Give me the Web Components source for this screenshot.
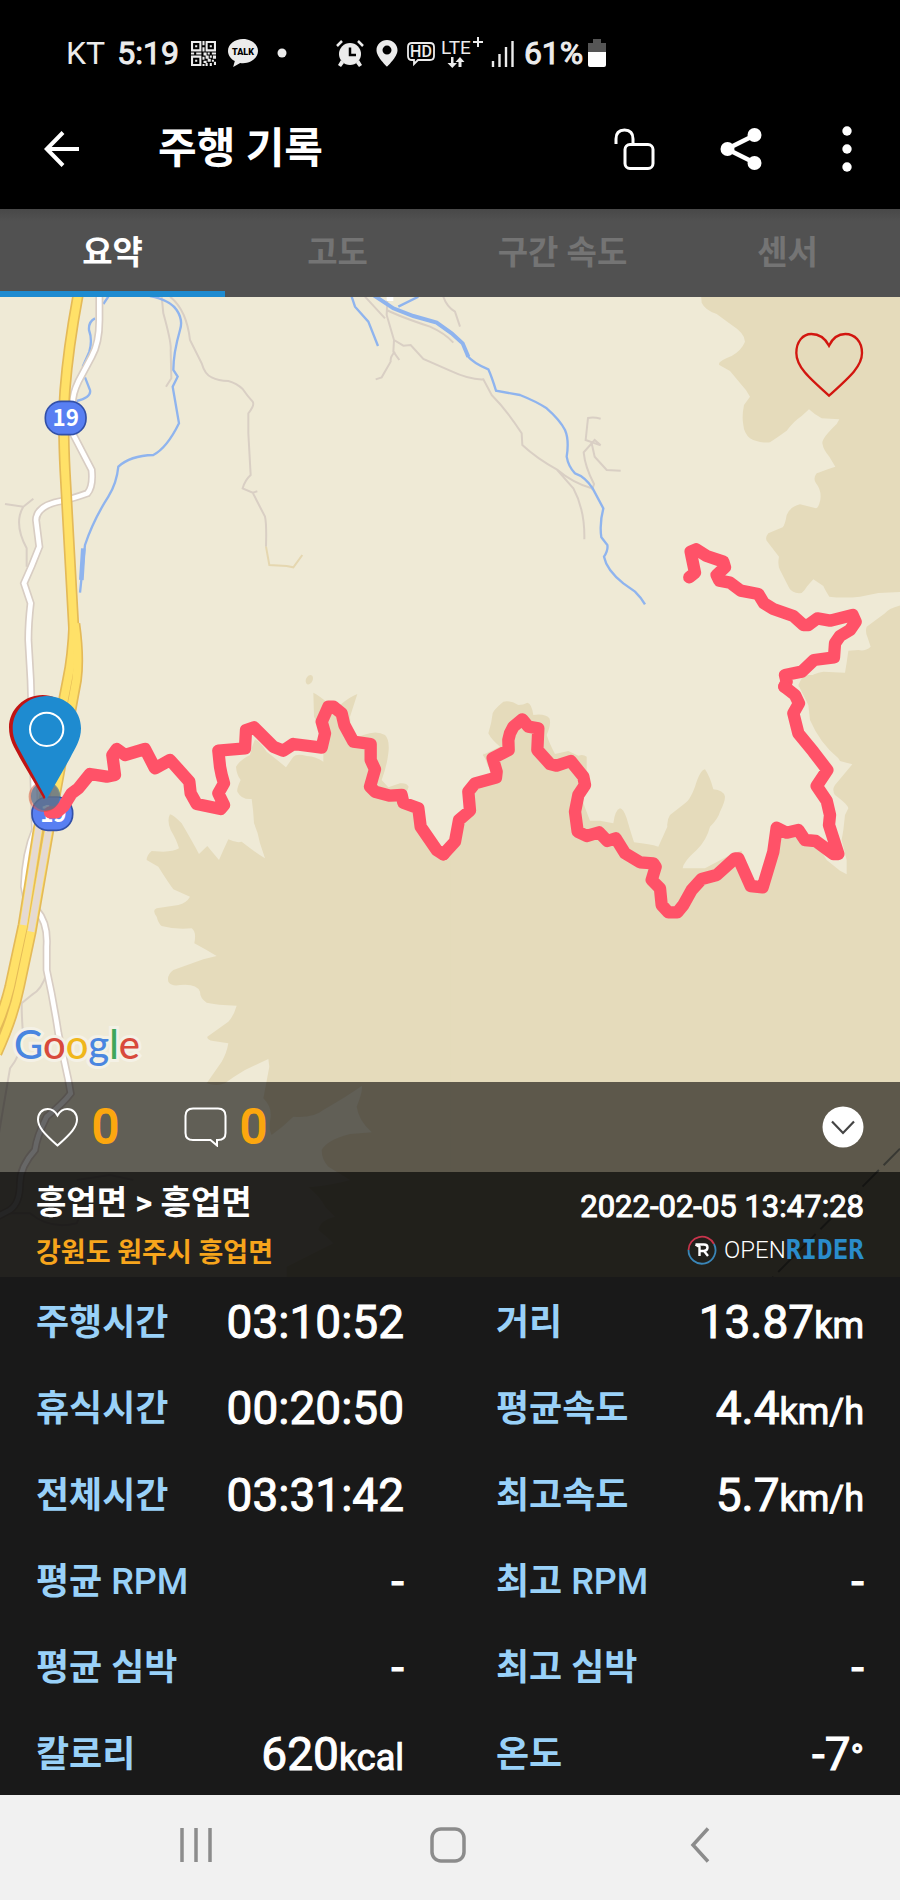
<!DOCTYPE html>
<html lang="ko">
<head>
<meta charset="utf-8">
<meta name="viewport" content="width=device-width, initial-scale=1">
<title>주행 기록</title>
<style>
  body { margin: 0; background: #191919; font-family: Roboto, "Noto Sans CJK KR", sans-serif; color: #fff; }
</style>
</head>
<body>
<ride-record-app></ride-record-app>

<script>
const define = (name, html, setup) => {
  const template = document.createElement('template');
  template.innerHTML = html;
  customElements.define(name, class extends HTMLElement {
    constructor() {
      super();
      this.attachShadow({ mode: 'open' }).append(template.content.cloneNode(true));
    }
    connectedCallback() { if (setup) setup(this, this.shadowRoot); }
  });
};

/* Device status bar */
define('status-bar', `
<style>
  :host { display: flex; align-items: center; gap: 12px; height: 106px; padding: 0 66px; background: #000; color: #ececec; font-size: 32px; line-height: 40px; box-sizing: border-box; }
  div { display: flex; align-items: center; gap: 12px; }
  .right { gap: 6px; margin-left: 27px; }
  .battery { gap: 5px; margin-left: -4px; }
  .strong { -webkit-text-stroke: 1px; }
  svg { display: block; flex: none; }
</style>
<div>
  <span>KT</span>
  <span class="strong">5:19</span>
  <svg width="25" height="25" viewBox="0 0 24 24" fill="none" stroke="#ececec" stroke-width="2">
    <path d="M1 1h8v8H1zM15 1h8v8h-8zM1 15h8v8H1z"/>
    <path fill="#ececec" stroke="none" d="M4 4h2v2H4zM18 4h2v2h-2zM4 18h2v2H4zM11 0h2v4h-2zM11 6h2v4h-2zM0 11h3v2H0zM5 11h5v2H5zM12 11h3v3h-3zM16 11h2v2h-2zM20 11h4v2h-4zM11 15h2v3h-2zM14 14h3v3h-3zM18 14h2v2h-2zM21 14h3v3h-3zM16 17h3v3h-3zM20 18h2v2h-2zM12 19h3v2h-3zM11 22h2v2h-2zM14 21h2v3h-2zM18 21h2v3h-2zM22 20h2v3h-2z"/>
  </svg>
  <svg width="30" height="28" viewBox="0 0 30 28"><path fill="#ececec" d="M15 0C6.700 0 0 5.400 0 12c0 4.300 2.700 8 6.800 10.100L5.200 28l7-4c.9.100 1.800.200 2.800.200 8.300 0 15-5.500 15-12.200S23.300 0 15 0z"/><text x="15" y="16" text-anchor="middle" font-family="Roboto, sans-serif" font-weight="900" font-size="9" fill="#000">TALK</text></svg>
  <svg width="24" height="10" viewBox="0 0 24 10"><circle cx="12" cy="5" r="4.500" fill="#ececec"/></svg>
</div>
<div class="right">
  <svg width="34" height="28" viewBox="0 0 34 28"><g fill="#ececec"><circle cx="17" cy="15" r="11"/><path d="M8 21l3 3-3 4-3-2zM26 21l-3 3 3 4 3-2z"/></g><g fill="none" stroke="#ececec" stroke-width="2.500"><path d="M4 7l5-5M30 7l-5-5"/></g><path d="M17 8.500V16h6" fill="none" stroke="#000" stroke-width="2.500"/></svg>
  <svg width="28" height="28" viewBox="0 0 28 28"><path fill="#ececec" fill-rule="evenodd" d="M14 1C8.200 1 3.500 5.400 3.500 11.200 3.500 18 14 27.500 14 27.500S24.500 18 24.500 11.200C24.500 5.400 19.800 1 14 1zm0 5.600a4.500 4.500 0 1 1 0 9 4.500 4.500 0 0 1 0-9z"/></svg>
  <svg width="28" height="28" viewBox="0 0 28 28"><path d="M5 4h18q4 0 4 4v9q0 4-4 4H11l-4 4v-4H5q-4 0-4-4V8q0-4 4-4z" fill="none" stroke="#ececec" stroke-width="1.800"/><text x="14" y="18" text-anchor="middle" font-family="Roboto, sans-serif" font-weight="500" font-size="16" fill="#ececec">HD</text></svg>
  <svg width="43" height="38" viewBox="0 0 43 38"><text x="0" y="20" font-family="Roboto, sans-serif" font-weight="400" font-size="19" fill="#ececec">LTE</text><path d="M37 3v10M32 8h10" stroke="#ececec" stroke-width="2" fill="none"/><path fill="#ececec" d="M10 23h2.500v6H16l-4.700 5-4.800-5H10zM17.500 33V28h-3l4.500-5 4.500 5h-3v5z"/></svg>
  <svg width="26" height="28" viewBox="0 0 26 28"><path d="M3 22v6M9.500 15v13M16 8v20M22.500 2v26" stroke="#ececec" stroke-width="2.400" fill="none"/></svg>
</div>
<div class="battery">
  <span class="strong">61%</span>
  <svg width="18" height="28" viewBox="0 0 18 28"><path fill="#555" d="M5 0h8v4h5v10H0V4h5z"/><path fill="#fff" d="M0 13h18v13q0 2-2 2H2q-2 0-2-2z"/></svg>
</div>
`);

/* App bar */
define('app-bar', `
<style>
  :host { display: flex; align-items: center; height: 103px; padding: 0 23px 18px 32px; background: #000; box-sizing: border-box; }
  h1 { flex: 1; margin: 0 0 0 66px; font-size: 42px; line-height: 52px; font-weight: 700; }
  nav { display: flex; align-items: center; gap: 46px; }
  button { display: grid; place-items: center; width: 60px; height: 60px; padding: 0; border: 0; background: none; color: #fff; }
  .back { place-items: center start; padding-left: 12px; }
</style>
<button class="back" aria-label="뒤로"><svg width="35" height="36" viewBox="0 0 35 36" fill="none" stroke="#fff" stroke-width="4"><path d="M35 18H3M19 1.500L2.800 18 19 34.500"/></svg></button>
<h1><slot></slot></h1>
<nav>
  <button aria-label="잠금 해제"><svg width="42" height="44" viewBox="0 0 42 44" fill="none" stroke="#fff" stroke-width="3"><rect x="11" y="17.500" width="28" height="24" rx="5"/><path d="M2 17v-5q0-9 8.500-9t8.500 9v5.500"/></svg></button>
  <button aria-label="공유"><svg width="42" height="42" viewBox="0 0 42 42"><path d="M35 7L7 21l28 14" fill="none" stroke="#fff" stroke-width="4.600"/><g fill="#fff"><circle cx="34.500" cy="7" r="7"/><circle cx="7.500" cy="21" r="7"/><circle cx="34.500" cy="35" r="7"/></g></svg></button>
  <button aria-label="더보기"><svg width="10" height="46" viewBox="0 0 10 46" fill="#fff"><circle cx="5" cy="5" r="4.700"/><circle cx="5" cy="23" r="4.700"/><circle cx="5" cy="41" r="4.700"/></svg></button>
</nav>
`);

/* Tabs */
define('tab-strip', `
<style>
  :host { display: grid; grid-template-columns: repeat(4, 1fr); height: 88px; background: linear-gradient(#484848, #515151 12px); }
  button { border: 0; border-bottom: 6px solid transparent; padding: 6px 0 0; background: none; color: #747474; font: 700 33px/44px Roboto, "Noto Sans CJK KR", sans-serif; }
  button[aria-selected="true"] { color: #fff; border-color: #1e8bd0; }
</style>
`, (host, root) => {
  host.setAttribute('role', 'tablist');
  host.getAttribute('items').split(',').forEach((label, i) => {
    const b = document.createElement('button');
    b.setAttribute('role', 'tab');
    b.setAttribute('aria-selected', i === 0);
    b.textContent = label;
    b.onclick = () => root.querySelectorAll('button').forEach(o => o.setAttribute('aria-selected', o === b));
    root.append(b);
  });
});

/* Map drawing; units are thirds of a pixel at 900px width */
define('route-map', `
<style>
  :host { display: block; background: #efead6; overflow: hidden; }
  svg { display: block; width: 100%; height: auto; }
  .land { fill: #e5dbbb; }
  .trail { fill: none; stroke: #d9cfc4; stroke-width: 6; }
  .river { fill: none; stroke: #8fb4ee; stroke-width: 7; }
  .road-edge { fill: none; stroke: #d8cdc3; stroke-width: 24; }
  .road { fill: none; stroke: #fff; stroke-width: 14; }
  .hwy-edge { fill: none; stroke: #e4ba58; stroke-width: 34; }
  .hwy { fill: none; stroke: #ffe168; stroke-width: 24; }
  .tunnel { fill: none; stroke: #e5dad2; stroke-width: 20; }
  .route { fill: none; stroke: #ff5268; stroke-width: 37; stroke-linejoin: round; stroke-linecap: round; }
  .shield { fill: #587ff2; stroke: #3250a8; stroke-width: 5; }
  text { font-family: "Noto Sans CJK KR", sans-serif; font-weight: 700; font-size: 67px; fill: #fff; text-anchor: middle; }
</style>
<svg viewBox="0 0 2700 2940" role="img" aria-label="주행 경로 지도">
  <g class="land">
    <g transform="translate(1350 -21)">
      <path d="M752 0L755 38Q765 60 800 72L845 105Q885 130 885 155Q875 180 845 198Q800 215 808 225L840 243L875 285Q890 300 900 320L882 345Q875 380 880 405Q882 430 900 445Q925 460 960 457Q985 440 1010 422Q1030 395 1055 378L1077 358Q1095 375 1115 385L1168 388L1160 402Q1115 445 1117 460Q1120 480 1138 500L1156 530Q1110 545 1100 550Q1088 565 1098 580Q1115 600 1111 630Q1105 655 1098 655L1050 643Q1020 650 1010 675Q1005 705 998 712L955 730Q945 742 950 752L987 800Q982 825 990 840L1018 895Q1028 912 1055 909Q1065 900 1072 888L1090 868L1120 888Q1125 900 1138 920Q1180 925 1230 920L1285 909L1355 906V0Z"/>
      <path d="M1355 945Q1315 955 1305 970L1250 1010Q1245 1025 1252 1040L1262 1070Q1245 1085 1225 1080L1195 1082Q1190 1120 1185 1148L1120 1145Q1090 1150 1070 1165L1045 1190H1355Z"/>
    </g>
    <path transform="translate(1350 1149)" d="M1355 -15H1060L1045 15L1075 75L1080 120Q1110 190 1165 235L1170 243L1207 253L1155 315Q1145 330 1155 345Q1195 375 1195 385L1185 405L1180 450L1175 480L1190 540V583L1170 572L1130 540L1095 483L1045 460L980 450L940 620H900L875 512L850 520L765 565L698 565Q700 545 740 510Q770 480 780 440Q805 415 810 395Q825 365 825 350Q820 330 790 328Q780 290 765 268Q750 270 735 320Q720 360 705 370L660 405Q650 420 652 440L625 500Q600 492 552 487Q540 450 530 415Q520 385 510 385Q495 390 490 430L450 422H420L404 380L390 340L410 300V230Q400 222 385 227L355 213L315 222Q298 190 290 165Q305 130 298 115Q285 100 250 105Q245 70 232 68Q220 75 205 75Q180 60 160 65Q130 90 128 100Q125 130 115 160Q125 180 150 200L98 225L125 260L150 290L75 305L55 340V395L20 420L-10 510V1800H1355Z"/>
    <path transform="translate(0 1149)" d="M1352 490L1330 530L1260 430L1250 380L1215 350L1226 320Q1220 308 1200 310L1165 322L1145 300Q1160 260 1165 220Q1170 180 1155 165Q1130 150 1090 165L1055 180L1050 110L1072 42Q1050 50 1020 75L985 70Q955 45 940 38L942 110L970 160V245Q950 230 920 228Q890 220 880 230L858 262Q820 230 800 215Q780 185 765 178Q755 200 750 225Q720 240 708 260Q710 285 722 300Q710 325 712 335Q725 360 755 357Q760 390 762 430Q775 460 780 490L795 535Q770 520 725 485Q710 490 685 478Q670 510 657 540Q640 520 622 498L597 522Q580 490 545 430Q520 405 510 403Q500 420 512 450Q530 480 537 505Q520 515 490 515L455 513Q440 525 440 540L475 560Q500 600 520 628L570 650Q560 668 535 675L470 685Q455 690 470 710Q475 730 485 738Q530 750 575 745Q590 755 583 790Q620 810 650 828L610 838L520 870Q500 885 505 905Q515 920 540 915Q590 910 600 935Q600 955 620 968Q650 975 710 977Q700 1010 685 1025Q650 1050 622 1070Q620 1080 640 1083L685 1090Q680 1120 665 1145L620 1210Q650 1220 675 1210L700 1192L735 1170L805 1137L808 1160L790 1255Q815 1280 812 1310Q805 1350 815 1365Q850 1340 880 1310Q940 1315 970 1290Q1040 1250 1085 1218Q1090 1230 1070 1280Q1075 1320 1115 1357L1050 1362Q980 1380 965 1410Q965 1440 985 1460L1050 1500Q1000 1515 925 1522Q960 1550 975 1580L1005 1610Q960 1620 955 1650Q980 1670 1000 1690L860 1760V1800H1352Z"/>
    <ellipse cx="928" cy="1148" rx="10" ry="15" transform="rotate(25 928 1148)"/>
    <path d="M1450 1370l45 10-30 30z"/>
  </g>
  <g transform="translate(0 -21)">
    <g class="trail">
      <path d="M483 0L490 70Q515 160 512 180L514 265L498 290M510 20Q560 60 570 150L605 220Q615 255 635 262Q655 272 685 273Q710 280 728 297Q740 315 758 335Q765 345 745 370L745 430L752 555Q735 570 728 595L758 608L772 604M758 608L795 680Q800 700 798 770"/>
      <path stroke="#e5d7b0" d="M798 770L808 825L860 828L880 832L907 795"/>
      <path d="M15 642L70 650L100 626M70 650Q40 700 80 775L80 830"/>
      <path d="M1095 20L1155 85M1162 30L1160 75L1182 150L1180 185L1198 210M1185 185Q1170 200 1172 215L1145 262L1127 268M1182 150L1210 167L1232 165L1270 207L1350 242Q1410 270 1450 268L1475 315Q1520 360 1565 430L1567 465Q1610 505 1670 538Q1720 580 1775 595M1670 538L1720 595Q1755 660 1753 748M1160 60Q1200 80 1290 110Q1335 130 1360 158M1330 20Q1340 50 1365 65L1380 110"/>
      <path d="M1802 386Q1780 380 1764 384L1757 450L1802 466M1802 466L1784 450L1751 487Q1755 530 1782 582L1776 600M1775 460L1784 500L1820 540L1862 542"/>
    </g>
    <g class="river">
      <path d="M450 18Q510 30 530 60Q550 90 540 120Q520 190 520 240L533 260L518 290L537 400Q500 475 460 495Q390 497 355 530Q350 580 325 620Q280 690 255 765L240 908"/>
      <path d="M325 20L310 42M285 85Q265 95 267 120Q278 150 268 185L248 230M255 262L270 300Q275 322 230 333"/>
      <path stroke-width="14" d="M250 775L244 870"/>
      <path d="M1055 20L1065 50L1105 95L1134 168M1255 20L1195 50"/>
      <path stroke-width="12" d="M1120 15L1180 55L1240 78L1310 98L1355 130L1388 160L1405 200"/>
      <path d="M1400 195Q1420 220 1465 238Q1475 260 1488 302L1560 315Q1610 335 1640 355Q1680 390 1695 420Q1708 450 1700 500Q1705 530 1725 550Q1755 560 1778 595L1810 655Q1798 700 1804 742L1822 765Q1825 780 1812 800Q1820 840 1870 880L1905 905Q1925 925 1935 943"/>
    </g>
  </g>
  <g transform="translate(0 1149)">
    <path class="trail" d="M140 880Q125 930 95 945L65 970Q65 1020 70 1070Q60 1130 30 1165L-10 1400M230 1500L330 1485L400 1500M-10 1600L90 1600Q150 1650 230 1630L260 1560"/>
  </g>
  <path class="trail" stroke-dasharray="70 20" style="stroke:#8c8b7e" d="M2700 2555L2300 2960"/>
  <g class="road-edge">
    <path d="M298 -10V70Q298 139 275 179L235 254Q218 289 218 319V409L275 519Q280 569 262 589Q220 604 190 611Q110 624 108 669L118 749Q95 809 72 859L92 919Q85 979 85 1029L92 1149L105 1599Q75 1669 72 1769L80 1809L110 1839Q145 1879 140 1949V2019Q160 2109 175 2209L205 2349L212 2389Q190 2419 140 2459Q110 2519 105 2559Q60 2609 60 2659Q60 2719 30 2739L-10 2760"/>
  </g>
  <g class="road">
    <path d="M298 -10V70Q298 139 275 179L235 254Q218 289 218 319V409L275 519Q280 569 262 589Q220 604 190 611Q110 624 108 669L118 749Q95 809 72 859L92 919Q85 979 85 1029L92 1149L105 1599Q75 1669 72 1769L80 1809L110 1839Q145 1879 140 1949V2019Q160 2109 175 2209L205 2349L212 2389Q190 2419 140 2459Q110 2519 105 2559Q60 2609 60 2659Q60 2719 30 2739L-10 2760"/>
    <path d="M1160 5h20"/>
  </g>
  <g class="hwy-edge">
    <path d="M235 -10Q205 149 195 279Q188 379 195 519L222 1009"/>
    <path d="M222 980Q218 1080 203 1149L115 1599L70 1884L30 2069Q10 2149 -20 2209"/>
    <path d="M224 980Q238 1080 229 1149L146 1599L93 1904L58 2069Q40 2159 -10 2269"/>
  </g>
  <g class="hwy">
    <path d="M235 -10Q205 149 195 279Q188 379 195 519L222 1009"/>
    <path d="M222 980Q218 1080 203 1149L115 1599L70 1884L30 2069Q10 2149 -20 2209"/>
    <path d="M224 980Q238 1080 229 1149L146 1599L93 1904L58 2069Q40 2159 -10 2269"/>
  </g>
  <path class="tunnel" d="M118 1580L70 1884M149 1580L93 1904"/>
  <rect class="shield" x="136" y="313" width="122" height="100" rx="48"/>
  <text x="197" y="387">19</text>
  <rect class="shield" x="96" y="1500" width="122" height="100" rx="48"/>
  <text x="160" y="1575">19</text>
  <polyline class="route" transform="translate(1350 -21)" points="718,862 735,848 725,800 722,785 738,778 770,798 820,815 825,832 800,855 808,872 840,878 872,902 925,912 942,940 970,957 1030,978 1060,1005 1075,1005 1102,985 1140,992 1208,975 1217,995 1200,1020 1170,1038 1155,1060 1152,1102 1092,1110 1055,1145 1005,1155 1010,1175 1003,1190"/>
  <polyline class="route" transform="translate(1350 1149)" points="1003,20 1035,45 1047,70 1030,100 1045,160 1090,215 1132,270 1100,318 1130,362 1140,405 1137,435 1165,522 1150,522 1097,483 1065,480 1045,450 1010,458 980,443 970,515 938,622 902,618 865,535 855,535 800,585 755,597 725,630 700,675 682,697 655,697 635,675 630,625 605,600 617,560 610,550 570,547 525,520 497,475 472,483 447,457 410,468 383,455 375,395 385,345 405,315 400,290 362,243 320,257 300,252 262,210 265,145 235,140 217,118 190,140 180,160 175,180 176,210 128,235 140,275 138,293 75,310 55,335 60,392 27,420 15,485 -20,523"/>
  <polyline class="route" transform="translate(0 1149)" points="1330,523 1310,510 1262,440 1255,385 1210,368 1205,345 1170,347 1125,335 1110,320 1125,268 1112,240 1112,192 1060,185 1033,135 1025,100 1000,80 985,80 965,125 975,160 965,203 880,192 850,212 820,200 762,142 738,150 735,205 655,212 660,260 665,285 672,310 655,340 672,375 662,387 590,372 572,340 568,305 510,240 465,265 435,207 375,225 350,207 337,225 345,285 320,290 270,282 235,325 215,340 190,380 170,397 150,397"/>
  <g transform="translate(0 1149)">
    <circle cx="132" cy="350" r="46" fill="#d8502f" opacity=".5"/>
    <circle cx="137" cy="348" r="44" fill="#3d78a0" opacity=".65"/>
    <path fill="#c01414" d="M128 45C180 45 230 90 230 145C230 180 215 205 200 235L132 358L60 235C42 200 27 180 27 142C27 88 73 45 128 45Z"/>
    <path fill="#1e8bd0" d="M140 48C197 48 243 90 243 145C243 180 225 205 210 235L140 358L72 235C54 200 38 180 38 145C38 90 83 48 140 48Z"/>
    <circle cx="140" cy="148" r="50" fill="none" stroke="#fff" stroke-width="6"/>
  </g>
</svg>
`);

/* Map with its overlays stacked in one grid */
define('map-panel', `
<style>
  :host { display: grid; grid-template: minmax(0, 1fr) auto auto / 1fr 1fr; }
  route-map { grid-area: 1 / 1 / -1 / -1; }
  .fav { grid-area: 1 / 2; place-self: start end; margin: 34px 35px 0 0; padding: 0; border: 0; background: none; }
  .fav svg { display: block; }
  .google { grid-area: 1 / 1; place-self: end start; margin: 0 0 16px 14px; font: 500 40px/44px Lato, sans-serif; -webkit-text-stroke: 6px #f4f1e6; paint-order: stroke fill; }
  .b { color: #4a86e0; } .r { color: #d84a3c; } .y { color: #f0b71c; } .g { color: #3fa65b; }
  .social { grid-area: 2 / 1 / 3 / -1; display: flex; align-items: center; height: 90px; padding: 0 36px; background: rgba(0,0,0,.595); }
  .social button { display: flex; align-items: center; gap: 13px; margin-right: 65px; padding: 0; border: 0; background: none; color: #fca70f; font: 400 48px/56px Roboto, sans-serif; -webkit-text-stroke: 2px; }
  .social .more { margin: 0 0 0 auto; }
  .info { grid-area: 3 / 1 / 4 / -1; display: flex; justify-content: space-between; height: 105px; padding: 8px 36px 0; background: rgba(0,0,0,.855); box-sizing: border-box; }
  h2, p { margin: 0; font-weight: 700; }
  h2 { font-size: 33px; line-height: 46px; }
  .where { font-size: 27px; line-height: 54px; color: #f7a51c; }
  .side { display: flex; flex-direction: column; align-items: flex-end; }
  time { font-size: 31px; line-height: 54px; -webkit-text-stroke: 1px; }
  .brand { display: flex; align-items: center; line-height: 32px; font-size: 24px; font-weight: 300; }
  .brand svg { margin-right: 7px; }
  .brand b { font: 700 26px/32px "DejaVu Sans Mono", monospace; color: #2a8ccb; }
</style>
<route-map></route-map>
<button class="fav" aria-label="좋아요"><svg width="72" height="68" viewBox="0 0 216 204"><path transform="translate(-1030 -124)" d="M1138 168C1125 143 1105 133 1085 133C1060 133 1040 155 1040 190C1040 230 1075 262 1138 318C1200 262 1237 230 1237 190C1237 155 1215 133 1187 133C1168 133 1150 143 1138 168Z" fill="none" stroke="#d2160f" stroke-width="7"/></svg></button>
<div class="google"><span class="b">G</span><span class="r">o</span><span class="y">o</span><span class="b">g</span><span class="g">l</span><span class="r">e</span></div>
<div class="social">
  <button aria-label="좋아요 수"><svg width="43" height="40" viewBox="0 0 43 40"><path d="M21.500 8.500C19 4 15.500 2 11.800 2C6 2 2 6.500 2 12.500C2 20 8 26.500 21.500 38.500C35 26.500 41 20 41 12.500C41 6.500 37 2 31.200 2C27.500 2 24 4 21.500 8.500Z" fill="none" stroke="#fff" stroke-width="2"/></svg>0</button>
  <button aria-label="댓글 수"><svg width="43" height="40" viewBox="0 0 43 40"><path d="M9 1.500H34Q41.500 1.500 41.500 9V26Q41.500 33 34 33H33V38.500L26.500 33H9Q1.500 33 1.500 26V9Q1.500 1.500 9 1.500Z" fill="none" stroke="#fff" stroke-width="2"/></svg>0</button>
  <button class="more" aria-label="접기"><svg width="42" height="42" viewBox="0 0 42 42"><circle cx="21" cy="21" r="20.500" fill="#fff"/><path d="M10 15.500L21 27l11-11.500" fill="none" stroke="#444" stroke-width="2.200"/></svg></button>
</div>
<div class="info">
  <div><h2>흥업면 &gt; 흥업면</h2><p class="where">강원도 원주시 흥업면</p></div>
  <div class="side"><time datetime="2022-02-05T13:47:28">2022-02-05 13:47:28</time>
    <div class="brand"><svg width="30" height="30" viewBox="0 0 30 30"><path d="M1.500 15A13.500 13.500 0 0 1 27 9" fill="none" stroke="#c8344c" stroke-width="1.800"/><path d="M27 9A13.500 13.500 0 1 1 1.500 15" fill="none" stroke="#3a86b8" stroke-width="1.800"/><path d="M8.500 9.500H17Q20.500 9.500 20.500 12.500T17 16L21 21M8.500 9.500L12.500 12V21M12.500 16H17" fill="none" stroke="#fff" stroke-width="2.400"/></svg><span>OPEN</span><b>RIDER</b></div>
  </div>
</div>
`);

/* One label and its value */
define('stat-item', `
<style>
  :host { display: flex; align-items: center; justify-content: space-between; padding-top: 6px; white-space: nowrap; }
  .label { color: #99d1f8; font-size: 36px; line-height: 48px; font-weight: 700; }
  .latin { font-weight: 500; }
  .value { padding-top: 2px; font-size: 46px; line-height: 56px; -webkit-text-stroke: 1px; }
  .unit { font-size: 36px; }
</style>
<span class="label"></span><span class="value"><slot></slot><span class="unit"></span></span>
`, (host, root) => {
  root.querySelector('.label').innerHTML = host.getAttribute('label').replace(/[A-Z]+/, '<span class="latin">$&</span>');
  root.querySelector('.unit').textContent = host.getAttribute('unit') || '';
});

define('stat-grid', `
<style>
  :host { display: grid; grid-template-columns: 1fr 1fr; grid-auto-rows: 1fr; column-gap: 92px; height: 518px; padding: 0 36px; background: #191919; box-sizing: border-box; }
</style>
<slot></slot>
`);

/* System navigation */
define('nav-bar', `
<style>
  :host { display: grid; grid-template-columns: repeat(3, 1fr); align-items: center; height: 105px; padding: 0 74px 6px 70px; background: #f1f1f1; box-sizing: border-box; }
  button { display: grid; place-items: center; height: 60px; padding: 0; border: 0; background: none; }
  svg { fill: none; stroke: #8c8c8c; stroke-width: 3.500; }
</style>
<button aria-label="최근 앱"><svg width="34" height="36" viewBox="0 0 34 36"><path d="M3 1v34M17 1v34M31 1v34"/></svg></button>
<button aria-label="홈"><svg width="36" height="36" viewBox="0 0 36 36"><rect x="2" y="2" width="32" height="32" rx="9"/></svg></button>
<button aria-label="뒤로"><svg width="20" height="36" viewBox="0 0 20 36"><path d="M18 1.500L3 18l15 16.500"/></svg></button>
`);

define('ride-record-app', `
<style>:host { display: block; }</style>
<status-bar></status-bar>
<app-bar>주행 기록</app-bar>
<tab-strip items="요약,고도,구간 속도,센서"></tab-strip>
<map-panel></map-panel>
<stat-grid>
  <stat-item label="주행시간">03:10:52</stat-item>
  <stat-item label="거리" unit="km">13.87</stat-item>
  <stat-item label="휴식시간">00:20:50</stat-item>
  <stat-item label="평균속도" unit="km/h">4.4</stat-item>
  <stat-item label="전체시간">03:31:42</stat-item>
  <stat-item label="최고속도" unit="km/h">5.7</stat-item>
  <stat-item label="평균 RPM">-</stat-item>
  <stat-item label="최고 RPM">-</stat-item>
  <stat-item label="평균 심박">-</stat-item>
  <stat-item label="최고 심박">-</stat-item>
  <stat-item label="칼로리" unit="kcal">620</stat-item>
  <stat-item label="온도" unit="°">-7</stat-item>
</stat-grid>
<nav-bar></nav-bar>
`);
</script>
</body>
</html>
